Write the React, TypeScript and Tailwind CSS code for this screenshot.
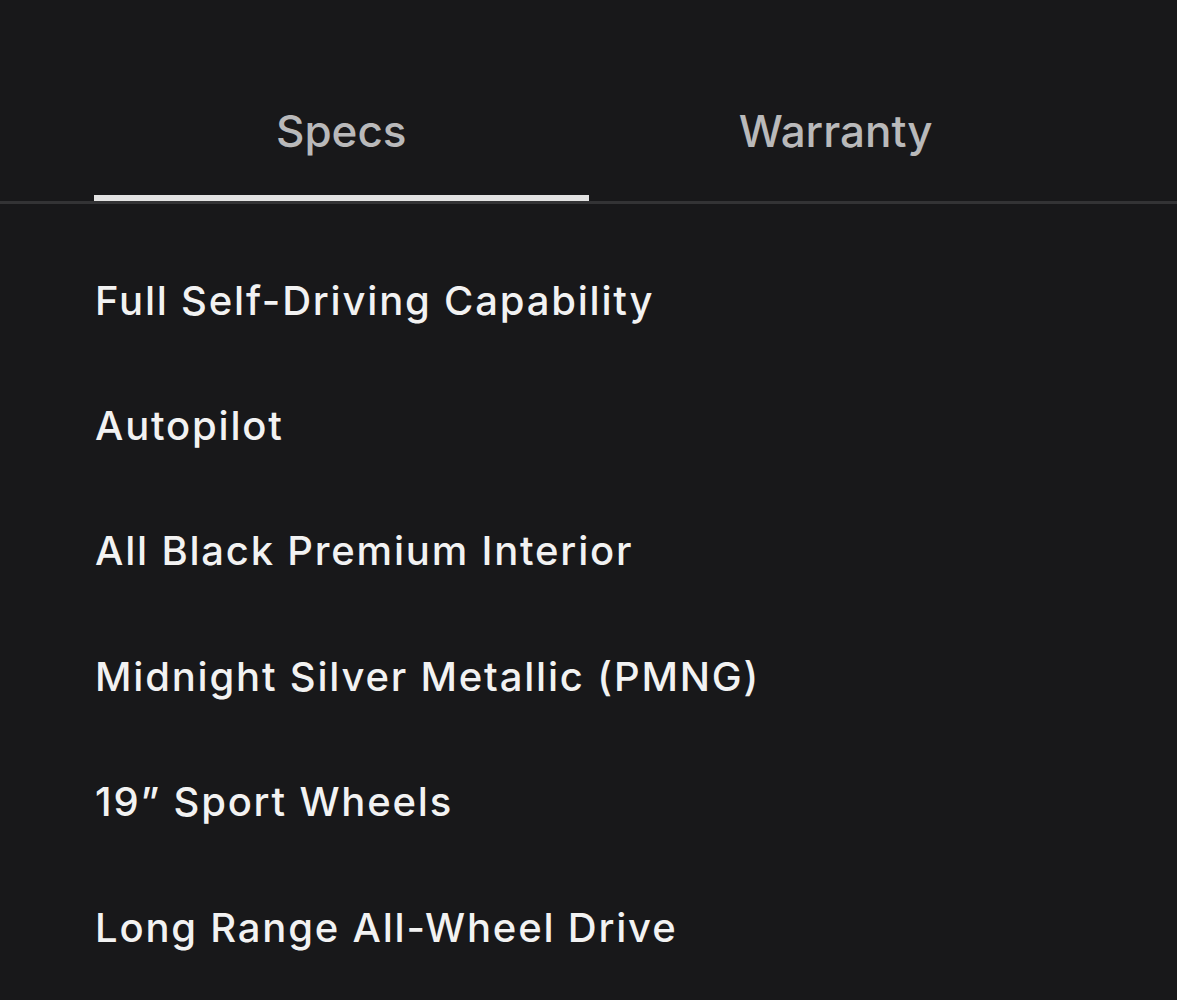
import React from "react";

const items = [
  "Full Self-Driving Capability",
  "Autopilot",
  "All Black Premium Interior",
  "Midnight Silver Metallic (PMNG)",
  "19” Sport Wheels",
  "Long Range All-Wheel Drive",
];

export default function App() {
  return (
    <div
      className="w-full h-[1000px] overflow-hidden bg-[#18181a]"
      style={{ fontFamily: "Inter, 'Liberation Sans', sans-serif" }}
    >
      <div className="w-full border-b-[3px] border-[#333335]">
        <div className="flex px-[94px]">
          <div className="flex-1 flex flex-col items-center pt-[109px]">
            <span className="text-[44px] leading-[44px] font-medium text-[#b9b9ba]">Specs</span>
            <div className="mt-[42px] h-[6px] w-full bg-[#e2e2e2] -mb-[3px]" />
          </div>
          <div className="flex-1 flex flex-col items-center pt-[109px]">
            <span className="text-[44px] leading-[44px] font-medium text-[#b9b9ba]">Warranty</span>
            <div className="mt-[42px] h-[6px] w-full" />
          </div>
        </div>
      </div>
      <div className="px-[95px] pt-[34px]">
        {items.map((t) => (
          <div
            key={t}
            className="h-[125.4px] flex items-center text-[40px] tracking-[1.8px] font-medium text-[#f2f2f2]"
          >
            {t}
          </div>
        ))}
      </div>
    </div>
  );
}
